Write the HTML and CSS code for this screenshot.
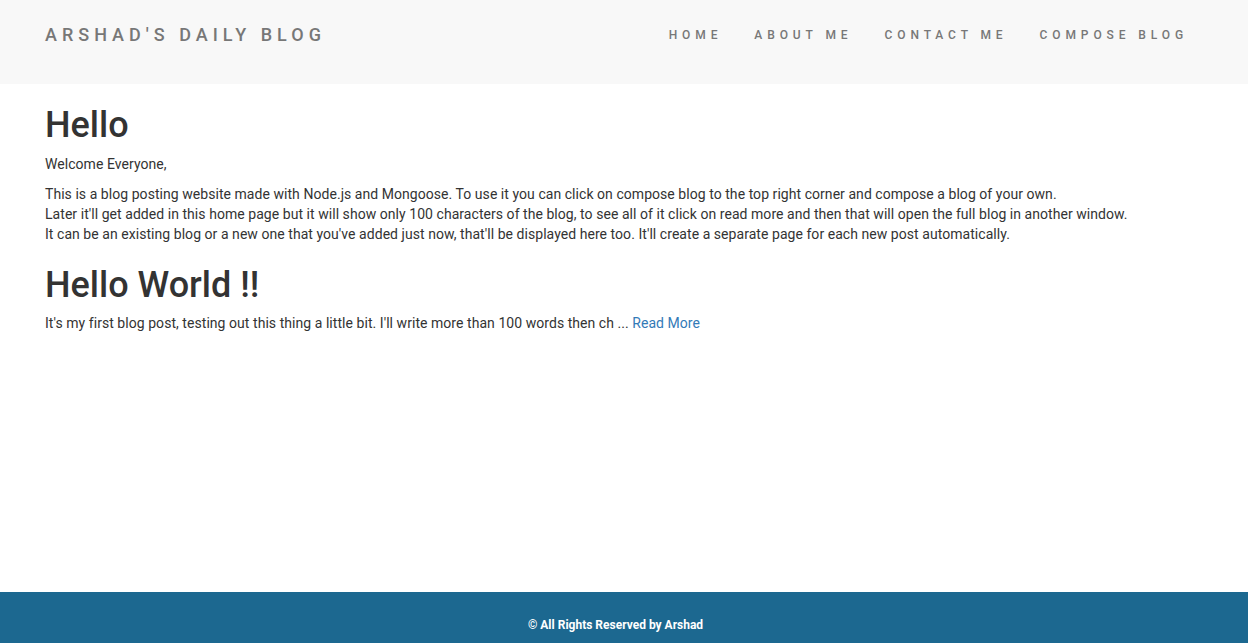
FILE: index.html
```html
<!DOCTYPE html>
<html>
<head>
<meta charset="utf-8">
<title>Arshad's Daily Blog</title>
<link rel="stylesheet" href="styles.css">
</head>
<body>
<div class="page">
  <header class="navbar">
    <div class="brand">Arshad's Daily Blog</div>
    <nav class="nav">
      <a href="#">Home</a>
      <a href="#">About Me</a>
      <a href="#">Contact Me</a>
      <a href="#">Compose Blog</a>
    </nav>
  </header>
  <main class="content">
    <h1>Hello</h1>
    <p>Welcome Everyone,</p>
    <p>This is a blog posting website made with Node.js and Mongoose. To use it you can click on compose blog to the top right corner and compose a blog of your own.<br>Later it'll get added in this home page but it will show only 100 characters of the blog, to see all of it click on read more and then that will open the full blog in another window.<br>It can be an existing blog or a new one that you've added just now, that'll be displayed here too. It'll create a separate page for each new post automatically.</p>
    <h1>Hello World !!</h1>
    <p>It's my first blog post, testing out this thing a little bit. I'll write more than 100 words then ch ... <a class="more" href="#">Read More</a></p>
  </main>
  <footer class="footer">© All Rights Reserved by Arshad</footer>
</div>
</body>
</html>
```
FILE: styles.css
```css
* { box-sizing: border-box; }
html, body { margin: 0; padding: 0; height: 100%; }
body {
  font-family: Roboto, "Liberation Sans", sans-serif;
  font-size: 14px;
  line-height: 20px;
  color: #333;
  background: #fff;
}
.page {
  min-height: 100%;
  display: flex;
  flex-direction: column;
}
.navbar {
  height: 84px;
  background: #f8f8f8;
  display: flex;
  align-items: flex-start;
  justify-content: space-between;
  padding: 25px 44px 0 45px;
}
.brand {
  text-transform: uppercase;
  font-size: 18px;
  line-height: 20px;
  letter-spacing: 5px;
  color: #777;
  font-weight: 500;
}
.nav {
  display: flex;
  padding-top: 1px;
}
.nav a {
  text-transform: uppercase;
  font-size: 12px;
  line-height: 18px;
  letter-spacing: 4.9px;
  color: #777;
  font-weight: 500;
  text-decoration: none;
  padding: 0 16px;
}
.content {
  flex: 1;
  padding: 0 45px;
  letter-spacing: 0.05px;
}
h1 {
  font-size: 36px;
  font-weight: 500;
  line-height: 1.1;
  margin: 22px 0 8px;
  color: #333;
  letter-spacing: 0;
}
p { margin: 0 0 10px; }
.more { color: #337ab7; text-decoration: none; }
.footer {
  height: 51px;
  background: #1c6890;
  color: #fff;
  font-size: 12px;
  font-weight: 700;
  display: flex;
  align-items: center;
  justify-content: center;
  padding: 14px 17px 0 0;
}
```
